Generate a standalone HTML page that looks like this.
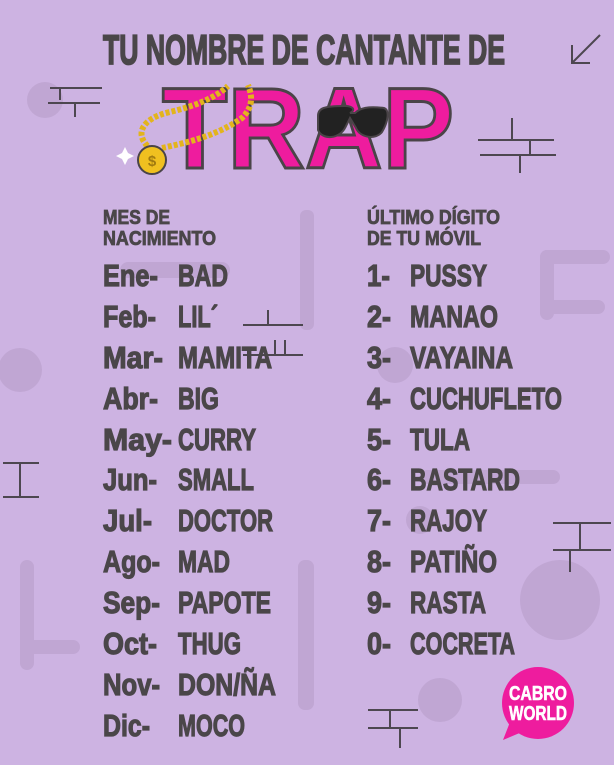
<!DOCTYPE html>
<html><head><meta charset="utf-8"><style>
html,body{margin:0;padding:0;background:#cdb3e2;}
svg{display:block}
</style></head><body>
<svg width="614" height="765" viewBox="0 0 614 765" xmlns="http://www.w3.org/2000/svg">
<rect width="614" height="765" fill="#cdb3e2"/>
<g fill="#a98fb8" opacity="0.35">
<circle cx="20" cy="370" r="22"/><circle cx="45" cy="100" r="18"/><circle cx="560" cy="600" r="40"/>
<circle cx="395" cy="365" r="18"/><circle cx="440" cy="700" r="22"/><circle cx="420" cy="520" r="14"/>
<rect x="300" y="210" width="14" height="120" rx="6"/><rect x="298" y="560" width="16" height="150" rx="7"/>
<rect x="120" y="262" width="110" height="16" rx="8"/><rect x="540" y="250" width="70" height="14" rx="7"/>
<rect x="545" y="300" width="60" height="14" rx="7"/><rect x="540" y="250" width="14" height="70" rx="7"/>
<rect x="420" y="470" width="140" height="14" rx="7"/><rect x="20" y="560" width="14" height="110" rx="7"/>
<rect x="20" y="640" width="60" height="14" rx="7"/>
</g>
<g stroke="#4d4750" stroke-width="2" fill="none">
<path d="M50 88h52M60 88v12M48 103h52M75 103v14"/>
<path d="M478 140h76M480 155h76M512 118v22M530 140v15M520 155v18"/>
<path d="M243 325h60M268 325v-15M275 340v15M243 355h60M285 340v15"/>
<path d="M3 463h36M20 463v34M3 497h36"/>
<path d="M553 523h58M553 550h58M580 523v27M570 550v22"/>
<path d="M368 710h50M390 710v18M368 728h50M400 728v20"/>
<path d="M600 35l-28 28M572 45v18h18"/>
</g>
<g font-family="'Liberation Sans',sans-serif" font-weight="bold" fill="#4a4649" stroke="#4a4649" stroke-width="1.2">
<text x="103" y="64" font-size="42" stroke-width="1.8" textLength="402" lengthAdjust="spacingAndGlyphs">TU NOMBRE DE CANTANTE DE</text>
<text x="103" y="224" font-size="20" stroke-width="0.8" textLength="67" lengthAdjust="spacingAndGlyphs">MES DE</text>
<text x="103" y="245" font-size="20" stroke-width="0.8" textLength="113" lengthAdjust="spacingAndGlyphs">NACIMIENTO</text>
<text x="367" y="224" font-size="20" stroke-width="0.8" textLength="133" lengthAdjust="spacingAndGlyphs">ÚLTIMO DÍGITO</text>
<text x="367" y="245" font-size="20" stroke-width="0.8" textLength="114" lengthAdjust="spacingAndGlyphs">DE TU MÓVIL</text>
<g font-size="31">
<text x="103" y="286" textLength="55" lengthAdjust="spacingAndGlyphs">Ene-</text>
<text x="103" y="327" textLength="53" lengthAdjust="spacingAndGlyphs">Feb-</text>
<text x="103" y="368" textLength="60" lengthAdjust="spacingAndGlyphs">Mar-</text>
<text x="103" y="409" textLength="55" lengthAdjust="spacingAndGlyphs">Abr-</text>
<text x="103" y="450" textLength="69" lengthAdjust="spacingAndGlyphs">May-</text>
<text x="103" y="490" textLength="54" lengthAdjust="spacingAndGlyphs">Jun-</text>
<text x="103" y="531" textLength="49" lengthAdjust="spacingAndGlyphs">Jul-</text>
<text x="103" y="572" textLength="57" lengthAdjust="spacingAndGlyphs">Ago-</text>
<text x="103" y="613" textLength="57" lengthAdjust="spacingAndGlyphs">Sep-</text>
<text x="103" y="654" textLength="54" lengthAdjust="spacingAndGlyphs">Oct-</text>
<text x="103" y="695" textLength="57" lengthAdjust="spacingAndGlyphs">Nov-</text>
<text x="103" y="736" textLength="47" lengthAdjust="spacingAndGlyphs">Dic-</text>
<text x="178" y="286" textLength="50" lengthAdjust="spacingAndGlyphs">BAD</text>
<text x="178" y="327" textLength="40" lengthAdjust="spacingAndGlyphs">LIL´</text>
<text x="178" y="368" textLength="94" lengthAdjust="spacingAndGlyphs">MAMITA</text>
<text x="178" y="409" textLength="41" lengthAdjust="spacingAndGlyphs">BIG</text>
<text x="178" y="450" textLength="78" lengthAdjust="spacingAndGlyphs">CURRY</text>
<text x="178" y="490" textLength="76" lengthAdjust="spacingAndGlyphs">SMALL</text>
<text x="178" y="531" textLength="95" lengthAdjust="spacingAndGlyphs">DOCTOR</text>
<text x="178" y="572" textLength="52" lengthAdjust="spacingAndGlyphs">MAD</text>
<text x="178" y="613" textLength="93" lengthAdjust="spacingAndGlyphs">PAPOTE</text>
<text x="178" y="654" textLength="63" lengthAdjust="spacingAndGlyphs">THUG</text>
<text x="178" y="695" textLength="98" lengthAdjust="spacingAndGlyphs">DON/ÑA</text>
<text x="178" y="736" textLength="67" lengthAdjust="spacingAndGlyphs">MOCO</text>
<text x="367" y="286" textLength="23" lengthAdjust="spacingAndGlyphs">1-</text>
<text x="367" y="327" textLength="24" lengthAdjust="spacingAndGlyphs">2-</text>
<text x="367" y="368" textLength="24" lengthAdjust="spacingAndGlyphs">3-</text>
<text x="367" y="409" textLength="24" lengthAdjust="spacingAndGlyphs">4-</text>
<text x="367" y="450" textLength="24" lengthAdjust="spacingAndGlyphs">5-</text>
<text x="367" y="490" textLength="24" lengthAdjust="spacingAndGlyphs">6-</text>
<text x="367" y="531" textLength="24" lengthAdjust="spacingAndGlyphs">7-</text>
<text x="367" y="572" textLength="24" lengthAdjust="spacingAndGlyphs">8-</text>
<text x="367" y="613" textLength="24" lengthAdjust="spacingAndGlyphs">9-</text>
<text x="367" y="654" textLength="24" lengthAdjust="spacingAndGlyphs">0-</text>
<text x="410" y="286" textLength="77" lengthAdjust="spacingAndGlyphs">PUSSY</text>
<text x="410" y="327" textLength="88" lengthAdjust="spacingAndGlyphs">MANAO</text>
<text x="410" y="368" textLength="103" lengthAdjust="spacingAndGlyphs">VAYAINA</text>
<text x="410" y="409" textLength="152" lengthAdjust="spacingAndGlyphs">CUCHUFLETO</text>
<text x="410" y="450" textLength="60" lengthAdjust="spacingAndGlyphs">TULA</text>
<text x="410" y="490" textLength="110" lengthAdjust="spacingAndGlyphs">BASTARD</text>
<text x="410" y="531" textLength="77" lengthAdjust="spacingAndGlyphs">RAJOY</text>
<text x="410" y="572" textLength="87" lengthAdjust="spacingAndGlyphs">PATIÑO</text>
<text x="410" y="613" textLength="76" lengthAdjust="spacingAndGlyphs">RASTA</text>
<text x="410" y="654" textLength="105" lengthAdjust="spacingAndGlyphs">COCRETA</text>
</g>
</g>
<!-- TRAP -->
<text x="162" y="168" font-family="'Liberation Sans',sans-serif" font-weight="bold" font-size="115" fill="#ee1c9e" stroke="#4a4448" stroke-width="3" textLength="292" lengthAdjust="spacingAndGlyphs">TRAP</text>
<!-- chain -->
<path d="M152 150 C132 135,142 118,170 112 C195 106,215 98,228 86 M162 148 C190 142,218 135,242 118 C254 106,252 95,248 85" stroke="#e3b41c" stroke-width="6" fill="none" stroke-dasharray="4 2"/>
<circle cx="152" cy="160" r="14" fill="#f0c020" stroke="#4a4448" stroke-width="2"/>
<text x="152" y="166" text-anchor="middle" font-family="'Liberation Sans',sans-serif" font-weight="bold" font-size="15" fill="#a07a10">$</text>
<path d="M122 153l3-6 3 6 6 3-6 3-3 6-3-6-6-3z" fill="#fff"/>
<!-- glasses -->
<path d="M318 116 C318 108,324 106,345 106 C353 106,356 110,350 113 L355 113 C360 108,368 106,384 108 C390 110,388 122,382 132 C376 140,360 138,356 128 L350 118 L346 126 C340 140,322 140,318 130 Z" fill="#222" stroke="#4a4448" stroke-width="2"/>
<!-- Cabro World -->
<circle cx="538" cy="703" r="36" fill="#ee1c9e"/>
<path d="M510 722 L503 740 L522 732 Z" fill="#ee1c9e"/>
<g font-family="'Liberation Sans',sans-serif" font-weight="bold" font-size="20" fill="#fff" stroke="#fff" stroke-width="0.6" text-anchor="middle">
<text x="538" y="700" textLength="58" lengthAdjust="spacingAndGlyphs">CABRO</text>
<text x="538" y="720" textLength="58" lengthAdjust="spacingAndGlyphs">WORLD</text>
</g>
</svg>
</body></html>
